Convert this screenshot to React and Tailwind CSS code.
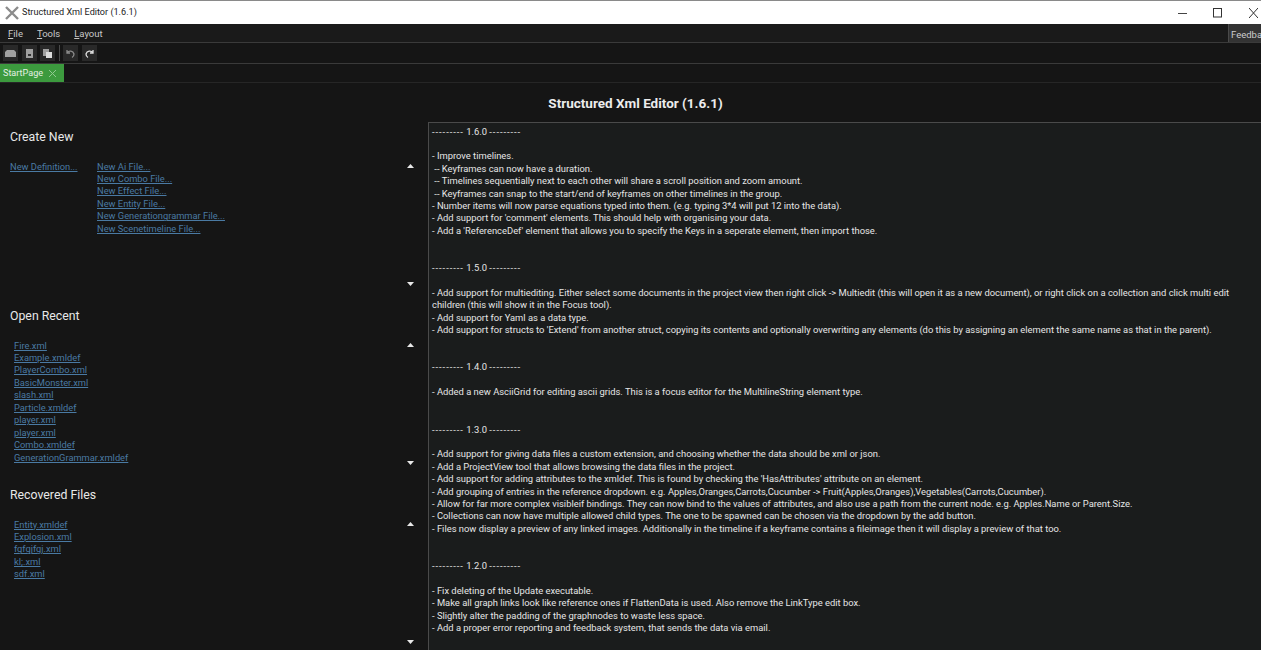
import React from "react";

const changelog = `- Improve timelines.
 -- Keyframes can now have a duration.
 -- Timelines sequentially next to each other will share a scroll position and zoom amount.
 -- Keyframes can snap to the start/end of keyframes on other timelines in the group.
- Number items will now parse equations typed into them. (e.g. typing 3*4 will put 12 into the data).
- Add support for 'comment' elements. This should help with organising your data.
- Add a 'ReferenceDef' element that allows you to specify the Keys in a seperate element, then import those.
@1.5.0
- Add support for multiediting. Either select some documents in the project view then right click -> Multiedit (this will open it as a new document), or right click on a collection and click multi edit
children (this will show it in the Focus tool).
- Add support for Yaml as a data type.
- Add support for structs to 'Extend' from another struct, copying its contents and optionally overwriting any elements (do this by assigning an element the same name as that in the parent).
@1.4.0
- Added a new AsciiGrid for editing ascii grids. This is a focus editor for the MultilineString element type.
@1.3.0
- Add support for giving data files a custom extension, and choosing whether the data should be xml or json.
- Add a ProjectView tool that allows browsing the data files in the project.
- Add support for adding attributes to the xmldef. This is found by checking the 'HasAttributes' attribute on an element.
- Add grouping of entries in the reference dropdown. e.g. Apples,Oranges,Carrots,Cucumber -> Fruit(Apples,Oranges),Vegetables(Carrots,Cucumber).
- Allow for far more complex visibleif bindings. They can now bind to the values of attributes, and also use a path from the current node. e.g. Apples.Name or Parent.Size.
- Collections can now have multiple allowed child types. The one to be spawned can be chosen via the dropdown by the add button.
- Files now display a preview of any linked images. Additionally in the timeline if a keyframe contains a fileimage then it will display a preview of that too.
@1.2.0
- Fix deleting of the Update executable.
- Make all graph links look like reference ones if FlattenData is used. Also remove the LinkType edit box.
- Slightly alter the padding of the graphnodes to waste less space.
- Add a proper error reporting and feedback system, that sends the data via email.`;

const Version = ({ v, first }) => (
  <div className={first ? "h-[24.84px]" : "mt-[24.84px] h-[24.84px]"}>
    <span className="tracking-[0.95px]">---------</span> {v} <span className="tracking-[0.95px]">---------</span>
  </div>
);

const ToolBtn = ({ children }) => (
  <div className="w-[15px] h-[16px] bg-[#292929] flex items-center justify-center">
    <svg width="11" height="11" viewBox="0 0 11 11" fill="none">{children}</svg>
  </div>
);

const Arrows = () => (
  <div className="w-[16px] h-[122px] mt-[3.5px] flex flex-col justify-between items-center">
    <svg width="7" height="4" viewBox="0 0 7 4"><path d="M3.5 0L7 4H0z" fill="#e8e8e8" /></svg>
    <svg width="7" height="4" viewBox="0 0 7 4"><path d="M0 0H7L3.5 4z" fill="#e8e8e8" /></svg>
  </div>
);

const Link = ({ children }) => (
  <div className="h-[12.47px] leading-[12.47px] text-[#4a7aa3] underline underline-offset-1 whitespace-nowrap">{children}</div>
);

const Section = ({ title, children }) => (
  <section className="h-[179px] flex flex-col shrink-0">
    <h2 className="h-[30px] pl-[10px] pt-[5px] text-[12.3px] leading-[20px] text-[#e8e8e8] font-normal">{title}</h2>
    <div className="flex justify-between pr-[10px] pt-[8.5px] text-[9.3px]">
      {children}
      <Arrows />
    </div>
  </section>
);

export default function App() {
  return (
    <div className="w-[1261px] h-[650px] overflow-hidden flex flex-col bg-[#151515] text-[9.38px] font-['Roboto',sans-serif]">
      <header className="h-[24px] shrink-0 bg-white border-t border-[#8a8a8a] flex items-center">
        <svg className="ml-[5px]" width="14" height="14" viewBox="0 0 14 14" fill="none" stroke="#8c8c8c" strokeWidth="2.4">
          <path d="M1 1L13 13M13 1L1 13" />
        </svg>
        <span className="ml-[3px] text-[9.1px] text-[#222]">Structured Xml Editor (1.6.1)</span>
        <div className="ml-auto flex items-center">
          <svg width="9" height="10" viewBox="0 0 9 10" stroke="#444"><path d="M0 5.5H9" /></svg>
          <svg className="ml-[26px]" width="9" height="10" viewBox="0 0 9 10" fill="none" stroke="#333"><rect x=".5" y=".5" width="8" height="8.5" /></svg>
          <svg className="ml-[27px] mr-[3px]" width="9" height="10" viewBox="0 0 9 10" stroke="#333"><path d="M0 0L9 10M9 0L0 10" /></svg>
        </div>
      </header>

      <nav className="h-[19px] shrink-0 bg-[#1a1a1a] border-b border-[#3a3a3a] flex items-center text-[9.5px] text-[#c8c8c8]">
        <span className="ml-[8px] pt-[2px]"><u>F</u>ile</span>
        <span className="ml-[14px] pt-[2px]"><u>T</u>ools</span>
        <span className="ml-[14px] pt-[2px]"><u>L</u>ayout</span>
        <span className="ml-auto h-full w-[33px] overflow-hidden bg-[#333] border-l border-[#4a4a4a] pl-[2px] pt-[1px] leading-[19px] text-[#ccc] whitespace-nowrap">Feedback</span>
      </nav>

      <div className="h-[21px] shrink-0 bg-[#151515] border-b border-[#3a3a3a] flex items-center pl-[3px] gap-[3.5px]">
        <ToolBtn><path d="M0 9V4L2 2H9L11 4V9z" fill="#a0a0a0" /></ToolBtn>
        <ToolBtn><path d="M2 1H9V10H2z" fill="#a0a0a0" /><path d="M4 6H7V8H4z" fill="#333333" /></ToolBtn>
        <ToolBtn><path d="M1 1H7V8H1z" fill="#a0a0a0" /><path d="M4 4H10V10H4z" fill="#dcdcdc" /></ToolBtn>
        <div className="w-px h-[16px] bg-[#4a4a4a]" />
        <ToolBtn><path d="M2 4.5C4 2.5 8 2.5 9 6C9 8 8 9 7 9.5M2 2V5H5" stroke="#8c8c8c" strokeWidth="1.3" /></ToolBtn>
        <ToolBtn><path d="M9 4.5C7 2.5 3 2.5 2 6C2 8 3 9 4 9.5M9 2V5H6" stroke="#e0e0e0" strokeWidth="1.3" /></ToolBtn>
      </div>

      <div className="h-[19px] shrink-0 bg-[#151515] border-b border-[#262626] flex">
        <div className="w-[64px] h-[18px] bg-[#3c9a3e] flex items-center pl-[3px] text-[9.1px] text-[#e4efe4]">
          <span className="pt-[2px]">StartPage</span>
          <svg className="ml-[6px] mt-[1px]" width="7" height="7" viewBox="0 0 7 7" stroke="#8fc990"><path d="M0 0L7 7M7 0L0 7" /></svg>
        </div>
      </div>

      <h1 className="h-[39px] shrink-0 flex items-center justify-center pt-[2px] pl-[10px] text-[13.5px] font-bold text-[#ececec]">Structured Xml Editor (1.6.1)</h1>

      <main className="flex-1 flex min-h-0">
        <aside className="w-[428px] shrink-0 flex flex-col">
          <Section title="Create New">
            <div className="flex pl-[10px]">
              <div className="w-[87px]"><Link>New Definition...</Link></div>
              <div>
                <Link>New Ai File...</Link>
                <Link>New Combo File...</Link>
                <Link>New Effect File...</Link>
                <Link>New Entity File...</Link>
                <Link>New Generationgrammar File...</Link>
                <Link>New Scenetimeline File...</Link>
              </div>
            </div>
          </Section>
          <Section title="Open Recent">
            <div className="pl-[14px]">
              {["Fire.xml","Example.xmldef","PlayerCombo.xml","BasicMonster.xml","slash.xml","Particle.xmldef","player.xml","player.xml","Combo.xmldef","GenerationGrammar.xmldef"].map((f, i) => <Link key={i}>{f}</Link>)}
            </div>
          </Section>
          <Section title="Recovered Files">
            <div className="pl-[14px]">
              {["Entity.xmldef","Explosion.xml","fgfgjfgj.xml","kl;.xml","sdf.xml"].map((f, i) => <Link key={i}>{f}</Link>)}
            </div>
          </Section>
        </aside>
        <article className="flex-1 min-w-0 bg-[#1a1c1c] border-l border-t border-[#4a4a4a] pl-[3px] pt-[2.5px] text-[#e6e6e6] leading-[12.42px] whitespace-pre overflow-hidden">
          {changelog.split("\n@").map((block, i) => {
            const lines = block.split("\n");
            const v = i === 0 ? "1.6.0" : lines[0];
            const body = i === 0 ? block : lines.slice(1).join("\n");
            return (
              <div key={v}>
                <Version v={v} first={i === 0} />
                <div>{body}</div>
              </div>
            );
          })}
        </article>
      </main>
    </div>
  );
}
